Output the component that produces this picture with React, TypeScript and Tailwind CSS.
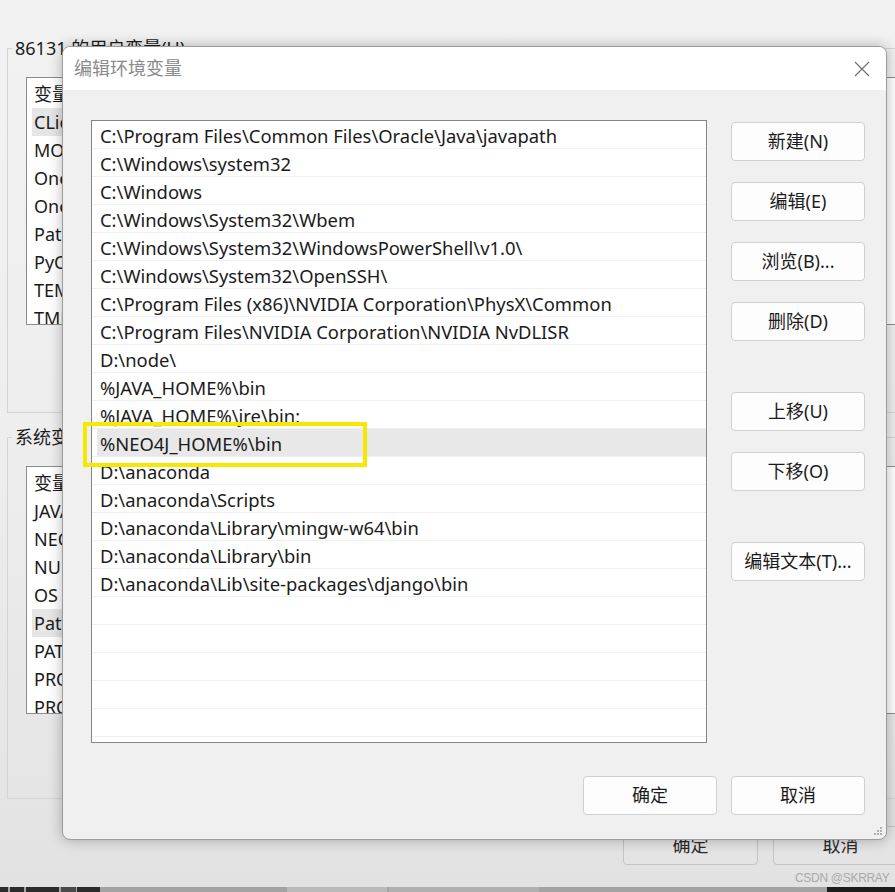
import React from "react";

const dialogRows = [
  "C:\\Program Files\\Common Files\\Oracle\\Java\\javapath",
  "C:\\Windows\\system32",
  "C:\\Windows",
  "C:\\Windows\\System32\\Wbem",
  "C:\\Windows\\System32\\WindowsPowerShell\\v1.0\\",
  "C:\\Windows\\System32\\OpenSSH\\",
  "C:\\Program Files (x86)\\NVIDIA Corporation\\PhysX\\Common",
  "C:\\Program Files\\NVIDIA Corporation\\NVIDIA NvDLISR",
  "D:\\node\\",
  "%JAVA_HOME%\\bin",
  "%JAVA_HOME%\\jre\\bin;",
  "%NEO4J_HOME%\\bin",
  "D:\\anaconda",
  "D:\\anaconda\\Scripts",
  "D:\\anaconda\\Library\\mingw-w64\\bin",
  "D:\\anaconda\\Library\\bin",
  "D:\\anaconda\\Lib\\site-packages\\django\\bin",
  "",
  "",
  "",
  "",
  "",
];

const userVars = ["变量", "CLion", "MOZ_PLUGIN_PATH", "OneDrive", "OneDriveConsumer", "Path", "PyCharm", "TEMP", "TMP"];
const sysVars = ["变量", "JAVA_HOME", "NEO4J_HOME", "NUMBER_OF_PROCESSORS", "OS", "Path", "PATHEXT", "PROCESSOR_ARCHITECTURE", "PROCESSOR_IDENTIFIER"];

function BgList({ items, selected }: { items: string[]; selected: number }) {
  return (
    <div className="mt-[17px] h-[248px] w-[900px] overflow-hidden border border-[#8c8c8c] bg-white pt-[2px]">
      {items.map((t, i) => (
        <div key={i} className="h-[28px] pl-[5px]">
          <div
            className={`h-[28px] w-[300px] pl-[2px] text-[18px] leading-[28px] text-[#1b1b1b] ${
              i === selected ? "bg-[#e6e6e6]" : ""
            }`}
          >
            {t}
          </div>
        </div>
      ))}
    </div>
  );
}

function Btn({ label, className = "" }: { label: string; className?: string }) {
  return (
    <div
      className={`flex h-[39px] w-[134px] shrink-0 items-center justify-center rounded-[4px] border border-[#d0d0d0] bg-[#fdfdfd] text-[18px] text-[#1b1b1b] ${className}`}
    >
      {label}
    </div>
  );
}

export default function App() {
  return (
    <div className="relative flex h-[892px] w-[895px] flex-col overflow-hidden bg-[#efefef] font-['Noto_Sans','Noto_Sans_CJK_SC',sans-serif]">
      {/* background window */}
      <div className="flex h-[887px] flex-col bg-gradient-to-b from-[#f2f2f2] via-[#eeeeee] to-[#e2e2e2] pl-[7px] pt-[36px]">
        <fieldset className="h-[377px] w-[900px] shrink-0 border border-[#d4d4d4] pl-[18px]">
          <legend className="-ml-[14px] px-[3px] text-[18px] leading-[24px] text-[#1b1b1b]">86131 的用户变量(U)</legend>
          <BgList items={userVars} selected={1} />
        </fieldset>
        <fieldset className="mt-[12px] h-[374px] w-[900px] shrink-0 border border-[#d4d4d4] pl-[18px]">
          <legend className="-ml-[14px] px-[3px] text-[18px] leading-[24px] text-[#1b1b1b]">系统变量(S)</legend>
          <BgList items={sysVars} selected={5} />
        </fieldset>
        <div className="mt-[27px] flex gap-[15px] pl-[616px]">
          <div className="flex h-[39px] w-[135px] shrink-0 items-center justify-center rounded-[4px] border border-[#c4c4c4] bg-[#e4e4e4] text-[18px] text-[#2a2a2a]">
            确定
          </div>
          <div className="flex h-[39px] w-[135px] shrink-0 items-center justify-center rounded-[4px] border border-[#c4c4c4] bg-[#e4e4e4] text-[18px] text-[#2a2a2a]">
            取消
          </div>
        </div>
      </div>

      {/* bottom taskbar strip */}
      <div className="flex h-[5px] bg-[#a3a3a3]">
        <div className="w-[8px] bg-[#2c2c2c]" />
        <div className="ml-[2px] w-[14px] bg-[#2c2c2c]" />
        <div className="ml-[2px] w-[33px] bg-[#2c2c2c]" />
        <div className="ml-[2px] w-[15px] bg-[#4a4a4a]" />
        <div className="ml-[1px] w-[23px] bg-[#2c2c2c]" />
        <div className="ml-[187px] w-[100px] bg-[#b9b9b9]" />
        <div className="ml-[2px] w-[150px] bg-[#b0b0b0]" />
        <div className="ml-auto w-[68px] bg-[#1c1c1c]" />
      </div>

      {/* watermark */}
      <div className="absolute left-[795px] top-[870px] font-['Liberation_Sans',sans-serif] text-[12px] leading-[16px] tracking-[-0.3px] text-[#a9a9a9]">
        CSDN @SKRRAY
      </div>

      {/* dialog */}
      <div className="absolute left-[62px] top-[46px] flex h-[794px] w-[825px] flex-col overflow-hidden rounded-[8px] border border-[#9c9c9c] bg-[#f0f0f0] shadow-[0_0_14px_rgba(0,0,0,0.28)]">
        <div className="flex h-[43px] items-center justify-between bg-white pl-[11px] pr-[16px]">
          <span className="text-[18px] text-[#8a8a8a]">编辑环境变量</span>
          <svg width="16" height="16" viewBox="0 0 16 16" className="mt-[1px]">
            <path d="M1 1 L15 15 M15 1 L1 15" stroke="#6e6e6e" strokeWidth="1.1" fill="none" />
          </svg>
        </div>
        <div className="flex pl-[28px] pt-[30px]">
          <div className="h-[623px] w-[616px] shrink-0 overflow-hidden border border-[#868686] bg-white">
            {dialogRows.map((t, i) => (
              <div key={i} className="h-[28px] border-b border-[#efefef]">
                {i === 11 ? (
                  <div className="ml-[5px] h-[27px] bg-[#e8e8e8] pl-[3px] text-[18.4px] leading-[29px] text-[#1b1b1b]">
                    {t}
                  </div>
                ) : (
                  <div className="h-[27px] pl-[8px] text-[18.4px] leading-[29px] text-[#1b1b1b]">{t}</div>
                )}
              </div>
            ))}
          </div>
          <div className="ml-[24px] flex flex-col pt-[2px]">
            <Btn label="新建(N)" />
            <Btn label="编辑(E)" className="mt-[21px]" />
            <Btn label="浏览(B)..." className="mt-[21px]" />
            <Btn label="删除(D)" className="mt-[21px]" />
            <Btn label="上移(U)" className="mt-[51px]" />
            <Btn label="下移(O)" className="mt-[21px]" />
            <Btn label="编辑文本(T)..." className="mt-[51px]" />
          </div>
        </div>
        <div className="mt-[33px] flex justify-end gap-[14px] pr-[21px]">
          <Btn label="确定" className="h-[38px]" />
          <Btn label="取消" className="h-[38px]" />
        </div>

        {/* highlight box */}
        <div className="absolute left-[20px] top-[375px] h-[45px] w-[284px] border-[4px] border-[#f6e800]" />

        {/* resize grip */}
        <svg className="absolute bottom-[3px] right-[3px]" width="10" height="10" viewBox="0 0 10 10">
          <rect x="7" y="1" width="2" height="2" fill="#b0b0b0" />
          <rect x="4" y="4" width="2" height="2" fill="#b0b0b0" />
          <rect x="7" y="4" width="2" height="2" fill="#b0b0b0" />
          <rect x="1" y="7" width="2" height="2" fill="#b0b0b0" />
          <rect x="4" y="7" width="2" height="2" fill="#b0b0b0" />
          <rect x="7" y="7" width="2" height="2" fill="#b0b0b0" />
        </svg>
      </div>
    </div>
  );
}
